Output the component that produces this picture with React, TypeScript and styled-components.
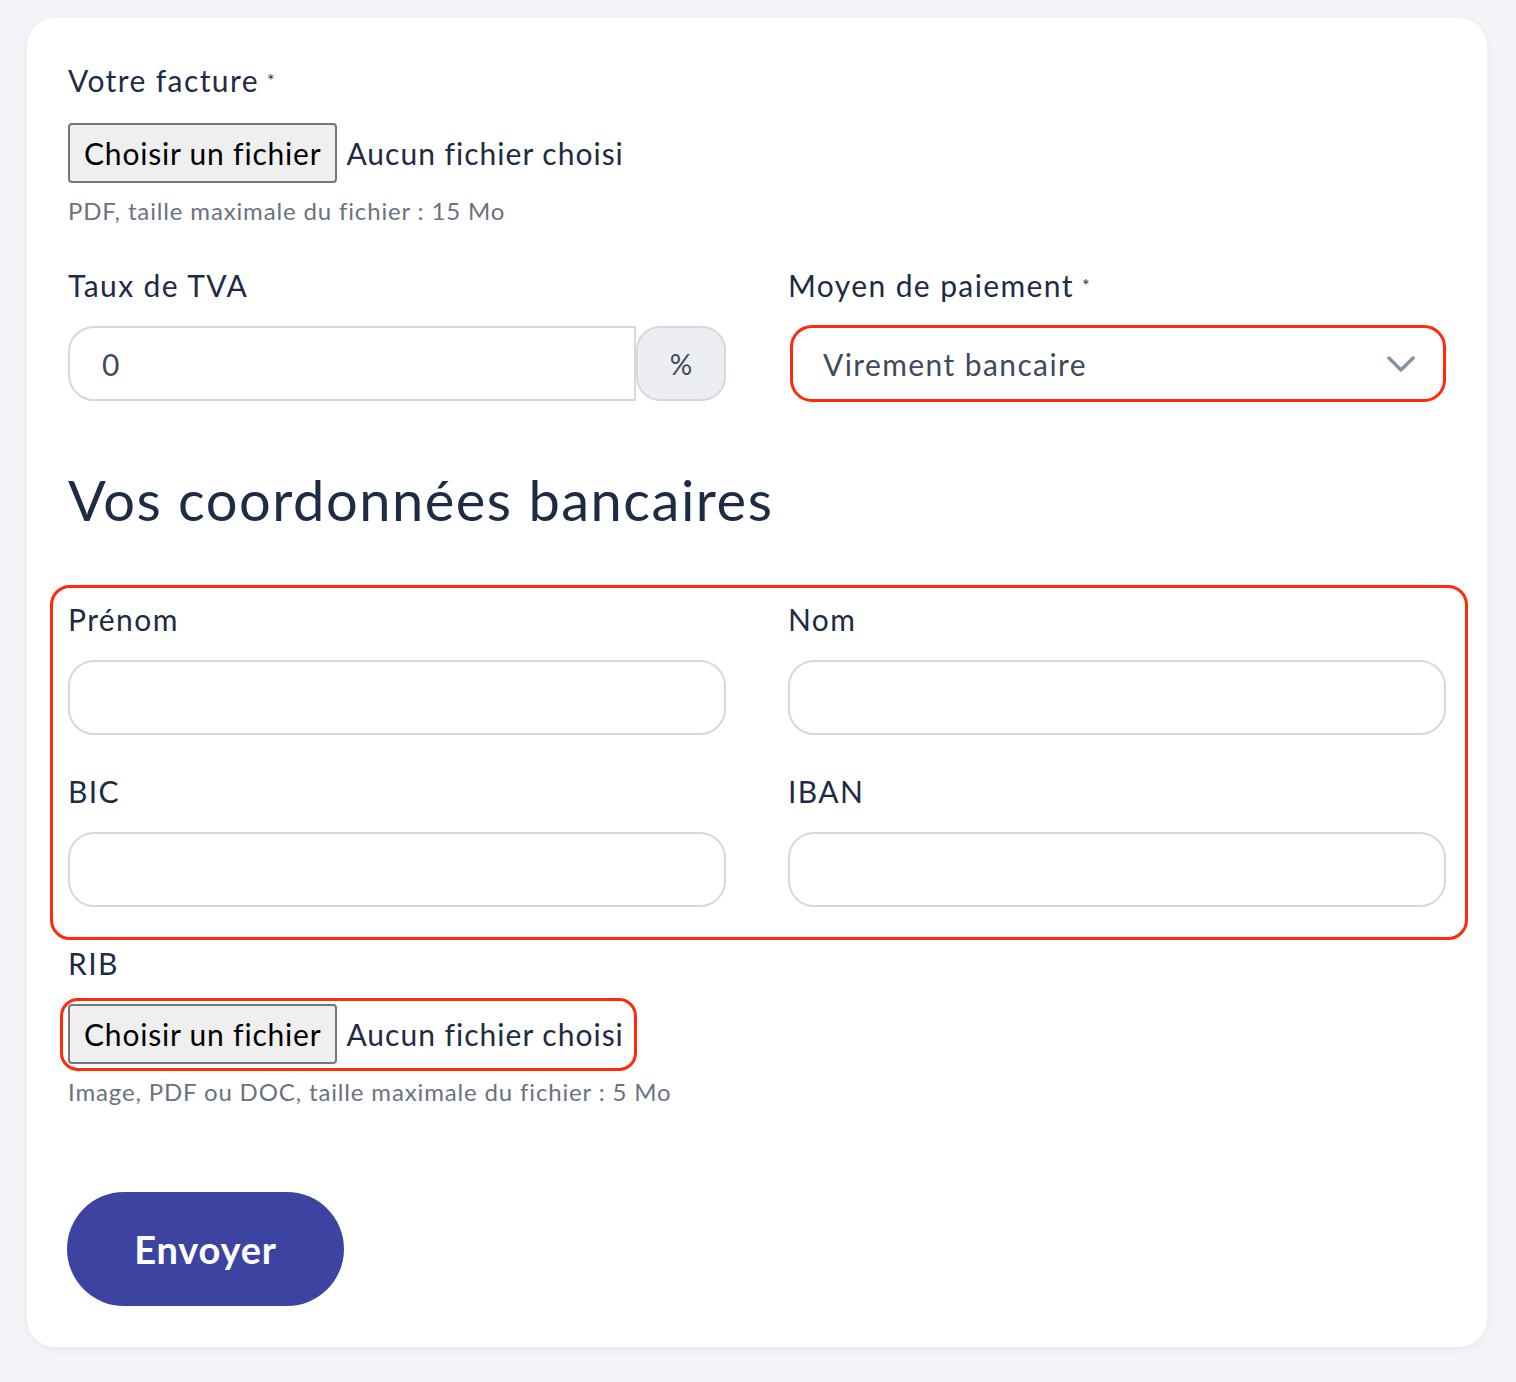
import React from "react";
import styled, { createGlobalStyle } from "styled-components";

const GlobalStyle = createGlobalStyle`
  * { box-sizing: border-box; }
  html, body {
    margin: 0;
    padding: 0;
    background: #f3f4f8;
    font-family: "Lato", "Noto Sans", sans-serif;
  }
`;

const Page = styled.div`
  padding: 18px 29px 36px 27px;
  min-height: 1382px;
`;

const Card = styled.form`
  background: #ffffff;
  border-radius: 28px;
  box-shadow: 0 2px 6px rgba(30, 43, 69, 0.06);
  padding: 42px 41px 41px 41px;
  display: flex;
  flex-direction: column;
`;

const Label = styled.label`
  display: block;
  color: #1e2b45;
  font-size: 30px;
  line-height: 40px;
  height: 40px;
  letter-spacing: 1.4px;
`;

const Required = styled.span`
  display: inline-block;
  font-size: 18px;
  line-height: 1;
  margin-left: 8px;
  vertical-align: top;
  position: relative;
  top: 11px;
`;

const FileRow = styled.div<{ $outlined?: boolean }>`
  display: inline-flex;
  align-items: center;
  align-self: flex-start;
  margin-top: ${(p) => (p.$outlined ? "15px" : "23px")};
  margin-left: ${(p) => (p.$outlined ? "-8px" : "0")};
  padding: ${(p) => (p.$outlined ? "3px 10px 4px 5px" : "0")};
  border: ${(p) => (p.$outlined ? "3px solid #ff2a0a" : "none")};
  border-radius: 18px;
`;

const FileButton = styled.button`
  height: 60px;
  padding: 0 14px;
  background: #efefef;
  border: 2px solid #767676;
  border-radius: 4px;
  color: #000;
  font-family: inherit;
  font-size: 30px;
  letter-spacing: 0.8px;
`;

const FileName = styled.span`
  margin-left: 9px;
  color: #1e2b45;
  font-size: 30px;
  letter-spacing: 1px;
`;

const Hint = styled.p<{ $top: number }>`
  margin: ${(p) => p.$top}px 0 0;
  color: #6b7280;
  font-size: 24px;
  line-height: 30px;
  letter-spacing: 0.85px;
`;

const Grid = styled.div`
  display: grid;
  grid-template-columns: 1fr 1fr;
  column-gap: 62px;
  row-gap: 36px;
`;

const TopGrid = styled(Grid)`
  margin-top: 39px;
`;

const Field = styled.div`
  display: flex;
  flex-direction: column;
  gap: 21px;
`;

const InputGroup = styled.div`
  display: flex;
  height: 75px;
`;

const TextInput = styled.input<{ $attached?: boolean }>`
  width: 100%;
  height: 75px;
  flex: 0 0 75px;
  border: 2px solid #d5d8de;
  border-radius: ${(p) => (p.$attached ? "26px 0 0 26px" : "26px")};
  padding: 0 32px;
  font-family: inherit;
  font-size: 30px;
  color: #3f4a5e;
  background: #fff;
  outline: none;
`;

const GroupInput = styled(TextInput)`
  flex: 1 1 auto;
`;

const Addon = styled.span`
  flex: 0 0 90px;
  display: flex;
  align-items: center;
  justify-content: center;
  background: #eceef2;
  border: 2px solid #d5d8de;
  border-radius: 24px;
  color: #3f4a5e;
  font-size: 28px;
`;

const Select = styled.div`
  height: 77px;
  margin: -1px 0 0 2px;
  border: 3px solid #ff2a0a;
  border-radius: 22px;
  display: flex;
  align-items: center;
  justify-content: space-between;
  padding: 0 28px 0 30px;
  color: #3f4a5e;
  font-size: 30px;
  letter-spacing: 1.4px;
`;

const Heading = styled.h2`
  margin: 64px 0 0;
  color: #1e2b45;
  font-size: 56px;
  line-height: 68px;
  font-weight: 400;
  letter-spacing: 1.5px;
`;

const Highlight = styled.div`
  margin: 51px -22px 0 -18px;
  padding: 11px 19px 30px 15px;
  border: 3px solid #ff2a0a;
  border-radius: 20px;
`;

const RibLabel = styled(Label)`
  margin-top: 3px;
`;

const Submit = styled.button`
  align-self: flex-start;
  margin-top: 85px;
  margin-left: -1px;
  width: 277px;
  height: 114px;
  border: none;
  border-radius: 57px;
  background: #3c43a0;
  color: #fff;
  font-family: inherit;
  font-size: 38px;
  font-weight: 700;
  letter-spacing: 0.8px;
`;

const Chevron = () => (
  <svg width="28" height="18" viewBox="0 0 28 18" fill="none">
    <path d="M2 3l12 12L26 3" stroke="#8a93a3" strokeWidth="3.5" strokeLinecap="round" strokeLinejoin="round" />
  </svg>
);

const FilePicker: React.FC<{ outlined?: boolean }> = ({ outlined }) => (
  <FileRow $outlined={outlined}>
    <FileButton type="button">Choisir un fichier</FileButton>
    <FileName>Aucun fichier choisi</FileName>
  </FileRow>
);

export default function App() {
  return (
    <>
      <GlobalStyle />
      <Page>
        <Card onSubmit={(e) => e.preventDefault()}>
          <Label>
            Votre facture<Required>*</Required>
          </Label>
          <FilePicker />
          <Hint $top={13}>PDF, taille maximale du fichier : 15 Mo</Hint>

          <TopGrid>
            <Field>
              <Label>Taux de TVA</Label>
              <InputGroup>
                <GroupInput $attached defaultValue="0" />
                <Addon>%</Addon>
              </InputGroup>
            </Field>
            <Field>
              <Label>
                Moyen de paiement<Required>*</Required>
              </Label>
              <Select>
                <span>Virement bancaire</span>
                <Chevron />
              </Select>
            </Field>
          </TopGrid>

          <Heading>Vos coordonnées bancaires</Heading>

          <Highlight>
            <Grid>
              <Field>
                <Label>Prénom</Label>
                <TextInput />
              </Field>
              <Field>
                <Label>Nom</Label>
                <TextInput />
              </Field>
              <Field>
                <Label>BIC</Label>
                <TextInput />
              </Field>
              <Field>
                <Label>IBAN</Label>
                <TextInput />
              </Field>
            </Grid>
          </Highlight>

          <RibLabel>RIB</RibLabel>
          <FilePicker outlined />
          <Hint $top={6}>Image, PDF ou DOC, taille maximale du fichier : 5 Mo</Hint>

          <Submit type="submit">Envoyer</Submit>
        </Card>
      </Page>
    </>
  );
}
